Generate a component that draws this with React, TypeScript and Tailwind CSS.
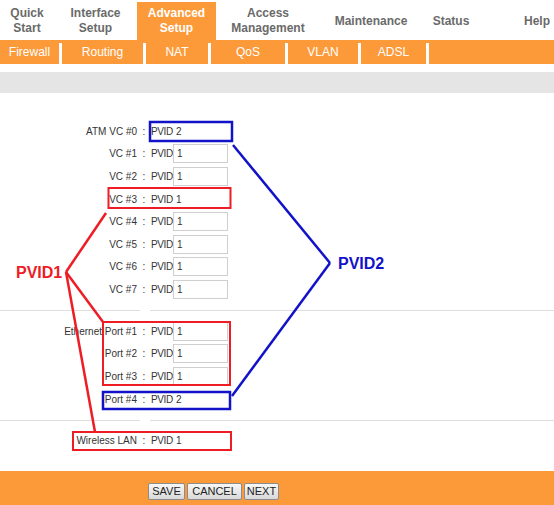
import React from "react";

type Row = { label: string; value: string; plain?: boolean };

const VC_ROWS: Row[] = [
  { label: "ATM VC #0", value: "2", plain: true },
  { label: "VC #1", value: "1" },
  { label: "VC #2", value: "1" },
  { label: "VC #3", value: "1", plain: true },
  { label: "VC #4", value: "1" },
  { label: "VC #5", value: "1" },
  { label: "VC #6", value: "1" },
  { label: "VC #7", value: "1" },
];

const PORT_ROWS: Row[] = [
  { label: "Ethernet Port #1", value: "1" },
  { label: "Port #2", value: "1" },
  { label: "Port #3", value: "1" },
  { label: "Port #4", value: "2", plain: true },
];

const WLAN_ROW: Row = { label: "Wireless LAN", value: "1", plain: true };

const SUB_TABS = [
  { label: "Firewall", w: "w-[59px]" },
  { label: "Routing", w: "w-[81px]" },
  { label: "NAT", w: "w-[62px]" },
  { label: "QoS", w: "w-[74px]" },
  { label: "VLAN", w: "w-[70px]" },
  { label: "ADSL", w: "w-[65px]" },
];

function PvidRow({ row }: { row: Row }) {
  return (
    <div className="flex h-[22.6px] items-center text-[10px] text-[#333]">
      <span className="w-[137px] shrink-0 text-right whitespace-nowrap">{row.label}</span>
      <span className="w-[14px] shrink-0 text-center">:</span>
      <span className="w-[22px] shrink-0 whitespace-nowrap tracking-[-0.4px]">PVID</span>
      <div
        className={`flex h-[19px] w-[55px] shrink-0 items-center pl-[3px] ${
          row.plain ? "" : "border border-[#cfcfcf]"
        }`}
      >
        {row.value}
      </div>
    </div>
  );
}

function Separator() {
  return (
    <div className="flex h-px">
      <div className="w-[140px] bg-[#dedede]" />
      <div className="w-[10px]" />
      <div className="flex-1 bg-[#dedede]" />
    </div>
  );
}

function NavItem({ lines, w, active }: { lines: string[]; w: string; active?: boolean }) {
  return (
    <div
      className={`${w} flex shrink-0 flex-col items-center justify-center text-[12px] leading-[15px] font-bold ${
        active ? "bg-[#fc9a3a] text-white" : "text-[#6a6a6a]"
      }`}
    >
      {lines.map((l) => (
        <span key={l} className="whitespace-nowrap">
          {l}
        </span>
      ))}
    </div>
  );
}

function FooterButton({ label, w }: { label: string; w: string }) {
  return (
    <button
      type="button"
      className={`${w} h-[17px] rounded-[2px] border border-[#8c8c8c] bg-gradient-to-b from-[#f7f7f7] to-[#d9d9d9] text-[11px] leading-none text-[#222]`}
    >
      {label}
    </button>
  );
}

function Annotations() {
  const red = "#ee1c24";
  const blue = "#1212c8";
  return (
    <svg
      className="pointer-events-none absolute inset-0"
      width={554}
      height={505}
      viewBox="0 0 554 505"
    >
      <rect x={150} y={122} width={82} height={19} fill="none" stroke={blue} strokeWidth={2.5} />
      <rect x={108.5} y={188} width={122} height={20} fill="none" stroke={red} strokeWidth={2} />
      <rect x={103} y={322} width={127} height={63} fill="none" stroke={red} strokeWidth={2} />
      <rect x={103} y={392} width={127} height={17} fill="none" stroke={blue} strokeWidth={2.5} />
      <rect x={73} y={432} width={158} height={18} fill="none" stroke={red} strokeWidth={2} />

      <line x1={66} y1={272} x2={106} y2={213} stroke={red} strokeWidth={2.5} />
      <line x1={66} y1={272} x2={103} y2={322} stroke={red} strokeWidth={2.5} />
      <line x1={66} y1={272} x2={95} y2={432} stroke={red} strokeWidth={2.5} />

      <line x1={233} y1={145} x2={330} y2={263} stroke={blue} strokeWidth={2.5} />
      <line x1={330} y1={263} x2={232} y2={396} stroke={blue} strokeWidth={2.5} />
    </svg>
  );
}

export default function App() {
  return (
    <div className="relative h-[505px] w-[554px] overflow-hidden bg-white font-['Liberation_Sans',Arial,sans-serif]">
      {/* top menu */}
      <div className="flex h-[40px] pt-[2px]">
        <NavItem lines={["Quick", "Start"]} w="w-[54px]" />
        <NavItem lines={["Interface", "Setup"]} w="w-[83px]" />
        <NavItem lines={["Advanced", "Setup"]} w="w-[79px]" active />
        <NavItem lines={["Access", "Management"]} w="w-[104px]" />
        <NavItem lines={["Maintenance"]} w="w-[102px]" />
        <NavItem lines={["Status"]} w="w-[58px]" />
        <div className="flex-1" />
        <NavItem lines={["Help"]} w="w-[34px]" />
      </div>

      {/* sub menu */}
      <div className="flex h-[24px] bg-[#fc9a3a]">
        {SUB_TABS.map((t) => (
          <React.Fragment key={t.label}>
            <div className={`${t.w} flex shrink-0 items-center justify-center text-[12px] text-white`}>
              {t.label}
            </div>
            <div className="mt-[3px] w-[3px] shrink-0 bg-white" />
          </React.Fragment>
        ))}
        <div className="flex-1" />
      </div>

      <div className="h-[8px]" />
      <div className="h-[21px] bg-[#e5e5e5]" />

      {/* form */}
      <div className="flex h-[378px] flex-col pt-[27px]">
        {VC_ROWS.map((r) => (
          <PvidRow key={r.label} row={r} />
        ))}
        <div className="mt-[9.5px]">
          <Separator />
        </div>
        <div className="mt-[8.7px]">
          {PORT_ROWS.map((r) => (
            <PvidRow key={r.label} row={r} />
          ))}
        </div>
        <div className="mt-[9.3px]">
          <Separator />
        </div>
        <div className="mt-[8.3px]">
          <PvidRow row={WLAN_ROW} />
        </div>
      </div>

      {/* footer */}
      <div className="flex h-[34px] gap-[2px] bg-[#fc9a3a] pt-[12px] pl-[148px]">
        <FooterButton label="SAVE" w="w-[37px]" />
        <FooterButton label="CANCEL" w="w-[55px]" />
        <FooterButton label="NEXT" w="w-[35px]" />
      </div>

      <Annotations />
      <span className="pointer-events-none absolute top-[265px] left-[16px] text-[16px] leading-none font-bold text-[#ee1c24]">
        PVID1
      </span>
      <span className="pointer-events-none absolute top-[256px] left-[338px] text-[16px] leading-none font-bold text-[#1212c8]">
        PVID2
      </span>
    </div>
  );
}
